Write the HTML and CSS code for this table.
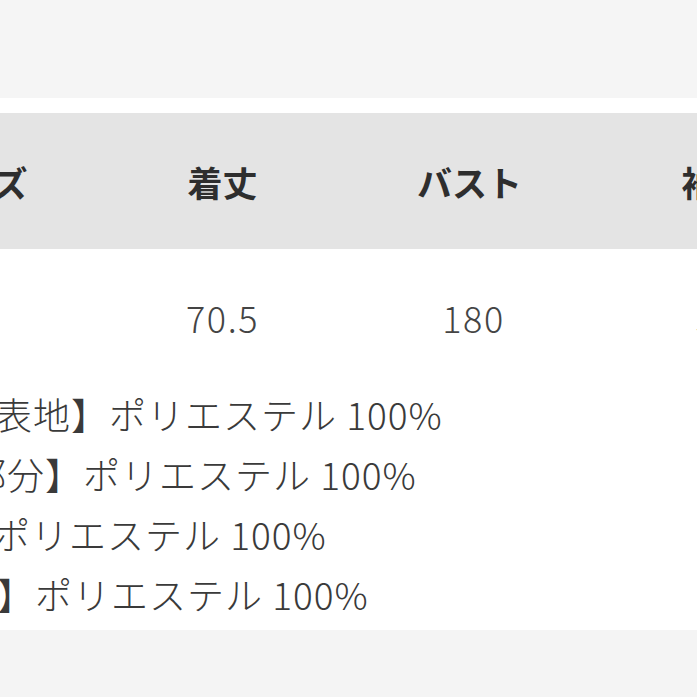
FILE: index.html
```html
<!DOCTYPE html>
<html lang="ja">
<head>
<meta charset="utf-8">
<link rel="stylesheet" href="styles.css">
</head>
<body>
<div class="page">
  <div class="top-band"></div>
  <div class="spacer"></div>
  <div class="size-table">
    <div class="row head">
      <div class="cell">サイズ</div>
      <div class="cell">着丈</div>
      <div class="cell">バスト</div>
      <div class="cell">袖丈</div>
    </div>
    <div class="row vals">
      <div class="cell">F</div>
      <div class="cell">70.5</div>
      <div class="cell bust">180</div>
      <div class="cell">56</div>
    </div>
  </div>
  <div class="materials">
    <div class="line l1">【表地】ポリエステル 100%</div>
    <div class="line l2">【リブ部分】ポリエステル 100%</div>
    <div class="line l3">【裏地】ポリエステル 100%</div>
    <div class="line l4">【中綿】ポリエステル 100%</div>
  </div>
  <div class="bottom-band"></div>
</div>
</body>
</html>
```

FILE: styles.css
```css
html, body {
  margin: 0;
  padding: 0;
  background: #ffffff;
  overflow: hidden;
}
.page {
  width: 697px;
  height: 697px;
  overflow: hidden;
  display: flex;
  flex-direction: column;
  font-family: "Noto Sans CJK JP", "Noto Sans", sans-serif;
}
.top-band {
  height: 98px;
  background: #f5f5f5;
  flex: none;
}
.spacer {
  height: 15px;
  flex: none;
}
.size-table {
  flex: none;
  margin-left: -148px;
  width: 988px;
}
.row {
  display: grid;
  grid-template-columns: repeat(4, 247px);
  align-items: center;
  justify-items: center;
}
.head {
  height: 136px;
  background: #e4e4e4;
  font-size: 35px;
  font-weight: 700;
  color: #2e2e2e;
}
.vals {
  height: 135px;
  font-size: 36px;
  font-weight: 300;
  color: #444444;
  letter-spacing: 1.5px;
}
.bust {
  padding-left: 8px;
}
.materials {
  flex: none;
  font-size: 37px;
  font-weight: 300;
  color: #3a3a3a;
  line-height: 60px;
  letter-spacing: 1px;
  padding-bottom: 6px;
  white-space: nowrap;
}
.l1 { margin-left: -43px; }
.l2 { margin-left: -145px; }
.l3 { margin-left: -159px; }
.l4 { margin-left: -117px; }
.bottom-band {
  flex: 1;
  background: #f4f4f4;
}
```
